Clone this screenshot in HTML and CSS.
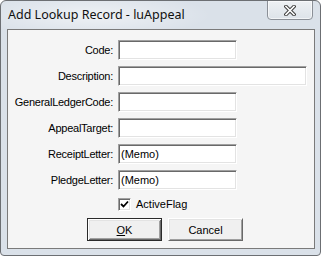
FILE: index.html
```html
<!DOCTYPE html>
<html>
<head>
<meta charset="utf-8">
<link rel="stylesheet" href="styles.css">
</head>
<body>
<div class="window">
  <div class="titlebar">
    <span class="title">Add Lookup Record - luAppeal</span>
    <div class="close">
      <svg width="12" height="11" viewBox="0 0 12 11">
        <path d="M2 1.5 L10 9.5 M10 1.5 L2 9.5" stroke="#3c3c3c" stroke-width="3.6" stroke-linecap="square" fill="none"/>
        <path d="M2 1.5 L10 9.5 M10 1.5 L2 9.5" stroke="#ffffff" stroke-width="1.6" stroke-linecap="square" fill="none"/>
      </svg>
    </div>
  </div>
  <div class="client">
    <div class="form">
      <label class="lbl">Code:</label><div class="field w119"></div>
      <label class="lbl">Description:</label><div class="field w189"></div>
      <label class="lbl">GeneralLedgerCode:</label><div class="field w119"></div>
      <label class="lbl">AppealTarget:</label><div class="field w119"></div>
      <label class="lbl">ReceiptLetter:</label><div class="field w119">(Memo)</div>
      <label class="lbl">PledgeLetter:</label><div class="field w119">(Memo)</div>
    </div>
    <div class="checkrow">
      <div class="checkbox">
        <svg width="9" height="9" viewBox="0 0 9 9"><path d="M1 4 L3.5 6.5 L8 1.5" stroke="#000" stroke-width="1.8" fill="none"/></svg>
      </div>
      <span class="checklabel">ActiveFlag</span>
    </div>
    <div class="buttons">
      <div class="btn default"><span><u>O</u>K</span></div>
      <div class="btn">Cancel</div>
    </div>
  </div>
</div>
</body>
</html>
```
FILE: styles.css
```css
html, body {
  margin: 0;
  padding: 0;
  background: #ffffff;
}
.window {
  box-sizing: border-box;
  width: 321px;
  height: 256px;
  border: 1px solid #6c6f73;
  border-radius: 6px 6px 4px 4px;
  background: radial-gradient(ellipse 120px 22px at 90px 14px, rgba(255,255,255,0.55), rgba(255,255,255,0)) , #dae1e9;
  padding: 0 5px 6px 6px;
  display: flex;
  flex-direction: column;
  font-family: "Liberation Sans", Arial, sans-serif;
  font-size: 11px;
  color: #000;
  overflow: hidden;
}
.titlebar {
  height: 28px;
  display: flex;
  align-items: flex-start;
  justify-content: space-between;
  margin-right: 2px;
}
.title {
  font-family: "Noto Sans", "Open Sans", sans-serif;
  font-size: 12.5px;
  padding-top: 5px;
  padding-left: 1px;
  color: #101010;
}
.close {
  box-sizing: border-box;
  width: 46px;
  height: 20px;
  margin-top: -1px;
  border: 1px solid #8b9097;
  border-radius: 0 0 4px 4px;
  background: linear-gradient(#eef1f4, #dde3e9);
  box-shadow: inset 0 0 0 1px rgba(255,255,255,0.6);
  display: flex;
  align-items: center;
  justify-content: center;
}
.close svg { display: block; margin-top: 1px; }
.client {
  flex: 1;
  box-sizing: border-box;
  border: 1px solid #7a7a7a;
  background: #f5f5f5;
  display: flex;
  flex-direction: column;
}
.form {
  display: grid;
  grid-template-columns: 105px auto;
  grid-auto-rows: 20px;
  column-gap: 5px;
  row-gap: 6px;
  padding-top: 10px;
}
.lbl {
  text-align: right;
  align-self: center;
  white-space: nowrap;
  line-height: 13px;
  letter-spacing: -0.25px;
  color: #000;
}
.field {
  box-sizing: border-box;
  height: 20px;
  background: #fff;
  border: 1px solid;
  border-color: #a0a0a0 #ffffff #ffffff #a0a0a0;
  box-shadow: inset 1px 1px 0 #696969, inset -1px -1px 0 #e3e3e3;
  padding: 0 2px;
  line-height: 18px;
  white-space: nowrap;
}
.w119 { width: 119px; }
.w189 { width: 189px; }
.checkrow {
  display: flex;
  align-items: center;
  margin-top: 8px;
  margin-left: 110px;
  height: 13px;
  gap: 5px;
}
.checkbox {
  box-sizing: border-box;
  width: 13px;
  height: 13px;
  background: #fff;
  border: 1px solid;
  border-color: #a0a0a0 #ffffff #ffffff #a0a0a0;
  box-shadow: inset 1px 1px 0 #696969, inset -1px -1px 0 #e3e3e3;
  display: flex;
  align-items: center;
  justify-content: center;
}
.checkbox svg { display: block; }
.checklabel { line-height: 13px; }
.buttons {
  display: flex;
  gap: 6px;
  margin-top: 7px;
  padding-left: 79px;
}
.btn {
  box-sizing: border-box;
  width: 75px;
  height: 23px;
  background: #f0f0f0;
  border: 1px solid;
  border-color: #ffffff #696969 #696969 #ffffff;
  box-shadow: inset 1px 1px 0 #e3e3e3, inset -1px -1px 0 #a0a0a0;
  display: flex;
  align-items: center;
  justify-content: center;
}
.btn.default {
  border: 1px solid #2a2a2a;
  box-shadow: inset 1px 1px 0 #ffffff, inset -1px -1px 0 #696969, inset 2px 2px 0 #e3e3e3, inset -2px -2px 0 #a0a0a0;
}
.btn u { text-decoration: underline; }
```
